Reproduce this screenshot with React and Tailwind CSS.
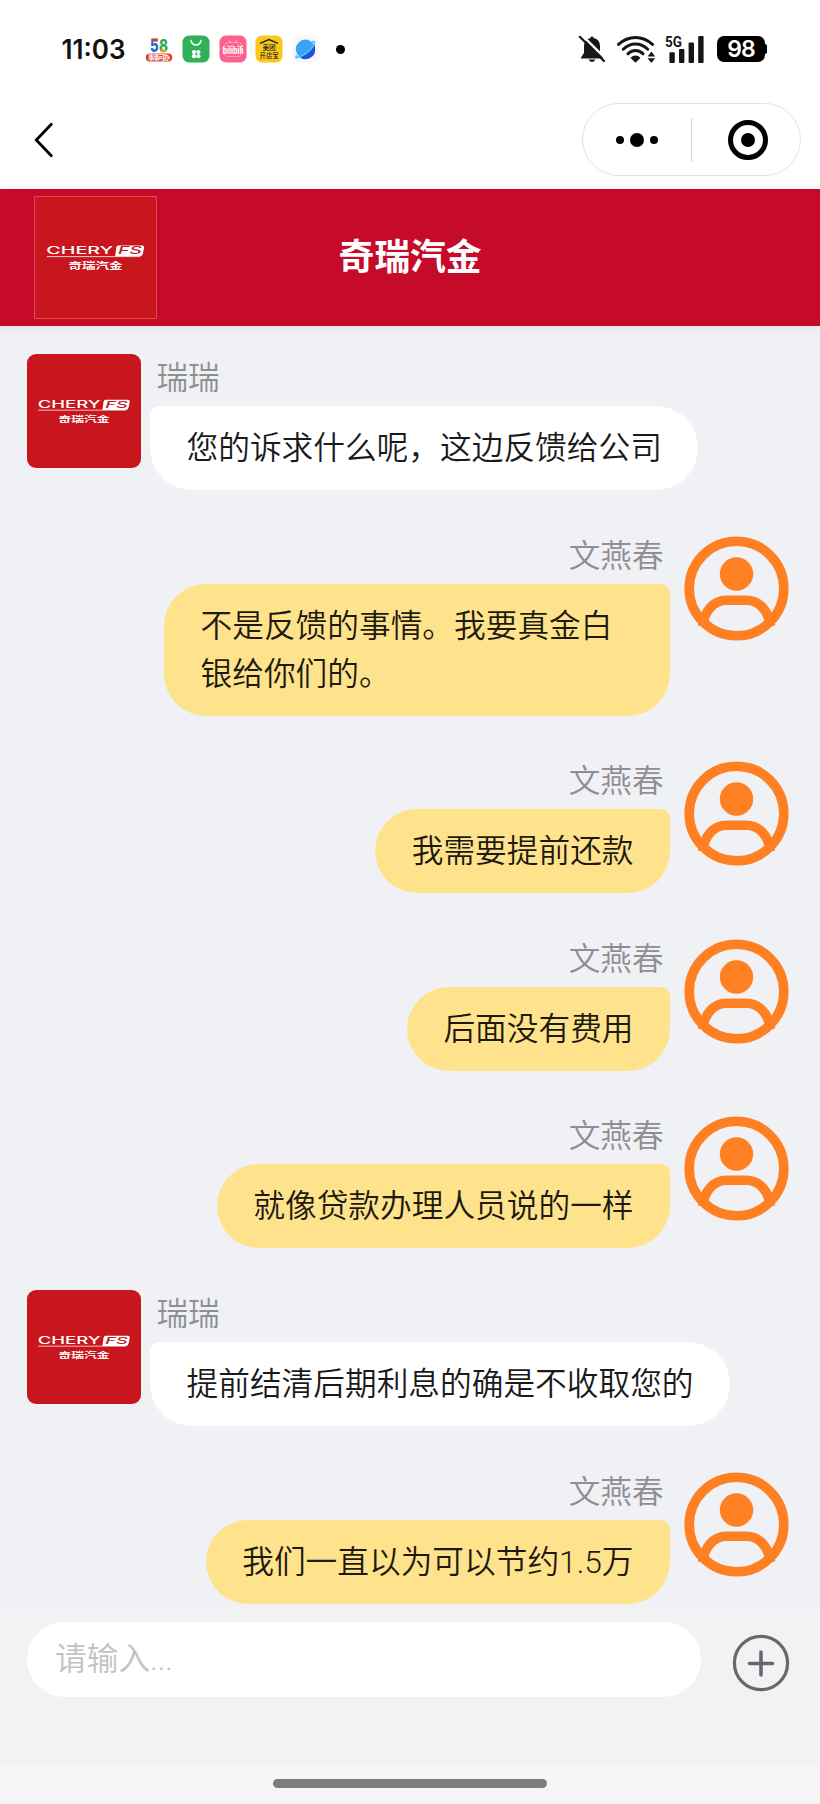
import React from 'react';

const messages = [
  { id: 1, from: 'agent', name: '瑞瑞', lines: ['您的诉求什么呢，这边反馈给公司'] },
  { id: 2, from: 'user', name: '文燕春', lines: ['不是反馈的事情。我要真金白', '银给你们的。'] },
  { id: 3, from: 'user', name: '文燕春', lines: ['我需要提前还款'] },
  { id: 4, from: 'user', name: '文燕春', lines: ['后面没有费用'] },
  { id: 5, from: 'user', name: '文燕春', lines: ['就像贷款办理人员说的一样'] },
  { id: 6, from: 'agent', name: '瑞瑞', lines: ['提前结清后期利息的确是不收取您的'] },
  { id: 7, from: 'user', name: '文燕春', lines: ['我们一直以为可以节约1.5万'] },
];

/**
 * BrandLogo - red CHERY FS square, used in the header and as agent avatar
 */
function BrandLogo({ className }) {
  return (
    <svg viewBox="0 0 123 123" className={className}>
      <rect width="123" height="123" fill="#c9151d" />
      <g fontFamily="Inter, sans-serif">
        <text x="11.5" y="58.3" fontSize="10.6" fontWeight="500" fill="#fff" textLength="68" lengthAdjust="spacingAndGlyphs">CHERY</text>
        <path d="M12 60.6H107" stroke="#fff" strokeWidth="0.8" />
        <path d="M84.5 49.3H109Q111.2 49.3 110.8 51.5L109.7 57.5Q109.2 60.3 106.5 60.3H81.4L82.6 51.6Q82.9 49.3 84.5 49.3Z" fill="#fff" />
        <text x="84.5" y="58.4" fontSize="10" fontWeight="500" fontStyle="italic" fill="#c9151d" textLength="24" lengthAdjust="spacingAndGlyphs">FS</text>
      </g>
      <text x="34" y="73.3" fontSize="8.8" fontWeight="700" fill="#fff" textLength="55" fontFamily="'Noto Sans CJK SC', sans-serif" lengthAdjust="spacingAndGlyphs">奇瑞汽金</text>
    </svg>
  );
}

function UserAvatar() {
  return (
    <svg viewBox="0 0 114 114" className="h-[114px] w-[114px] shrink-0" fill="none" stroke="#ff8022" strokeWidth="9.6">
      <circle cx="57.5" cy="56.5" r="47.3" />
      <circle cx="57.5" cy="42" r="16.7" fill="#ff8022" stroke="none" />
      <path d="M23.5 94.2C25.5 79 34.5 68.2 47.5 68.2H67.5C80.5 68.2 89.5 79 91.5 94.2" />
    </svg>
  );
}

function StatusBar() {
  return (
    <div className="flex h-[98px] items-center pl-[61px] pr-[53px]">
      <svg viewBox="0 0 66 40" className="h-10 w-[66px] overflow-visible">
        <text x="0.5" y="29.5" fontSize="26.5" fontWeight="600" fill="#111" fontFamily="Inter, sans-serif" textLength="64" lengthAdjust="spacingAndGlyphs">11:03</text>
      </svg>
      <div className="ml-[18px] flex items-center gap-[8.8px]">
        {/* 58 */}
        <svg viewBox="0 0 28 28" className="h-7 w-7 overflow-visible">
          <g fontFamily="Inter, sans-serif" fontWeight="800" fontSize="18">
            <text x="5" y="16.5" fill="#2465d8" textLength="8.6" lengthAdjust="spacingAndGlyphs">5</text>
            <text x="14" y="16.5" fill="#2fa84f" textLength="9" lengthAdjust="spacingAndGlyphs">8</text>
          </g>
          <path d="M6.4 4.6H12.6" stroke="#e5392b" strokeWidth="2.4" />
          <path d="M15.6 15.4Q18.4 17.6 21.6 15" stroke="#f0a51c" strokeWidth="2.2" fill="none" />
          <rect x="0.8" y="18.4" width="26.4" height="8.2" rx="4" fill="#d9422c" />
          <text x="3" y="24.9" fontSize="6.4" fontWeight="700" fill="#fff" textLength="22" fontFamily="'Noto Sans CJK SC', sans-serif">事事可办</text>
        </svg>
        {/* shopping bag */}
        <svg viewBox="0 0 28 28" className="h-7 w-7">
          <rect x="0.5" y="0.5" width="27" height="27" rx="6.5" fill="#31b057" />
          <path d="M9 5.5Q10 10 14 10T19 5.5" stroke="#fff" strokeWidth="1.5" fill="none" strokeLinecap="round" />
          <g fill="#fff">
            <circle cx="12" cy="17" r="2.1" />
            <circle cx="16.4" cy="17" r="2.1" />
            <circle cx="12" cy="21.2" r="2.1" />
            <circle cx="16.4" cy="21.2" r="2.1" />
          </g>
        </svg>
        {/* bilibili */}
        <svg viewBox="0 0 28 28" className="h-7 w-7 overflow-visible">
          <rect x="0.5" y="0.5" width="27" height="27" rx="6.5" fill="#fb6090" />
          <path d="M10 5L12 8M18 5L16 8" stroke="#fff" strokeOpacity="0.5" />
          <rect x="5.5" y="7.5" width="17" height="14" rx="3" fill="none" stroke="#fff" strokeOpacity="0.35" />
          <text x="3.5" y="18.6" fontSize="11" fontWeight="700" fill="#fff" fontFamily="Inter, sans-serif" textLength="21" lengthAdjust="spacingAndGlyphs">bilibili</text>
        </svg>
        {/* merchant app */}
        <svg viewBox="0 0 28 28" className="h-7 w-7 overflow-visible">
          <rect x="0.5" y="0.5" width="27" height="27" rx="6.5" fill="#fcc71b" />
          <path d="M5 8.4L14 4.6L23 8.4" stroke="#222" strokeWidth="1.4" fill="none" />
          <g fontFamily="'Noto Sans CJK SC', sans-serif" fontWeight="500" fill="#222">
            <text x="7.4" y="15.4" fontSize="6.6">美团</text>
            <text x="4.6" y="22.6" fontSize="6.4">开店宝</text>
          </g>
        </svg>
        {/* browser */}
        <svg viewBox="0 0 28 28" className="h-7 w-7">
          <rect x="0.5" y="0.5" width="27" height="27" rx="6.5" fill="#f7f8fa" />
          <circle cx="13.4" cy="14.2" r="9.6" fill="#37a3f8" />
          <path d="M23 13A9.6 9.6 0 0 1 7 21.6Q18 19.5 23 9.6Z" fill="#1b55dc" />
          <path d="M5 22.6Q3.4 23.2 4.4 20.8M5 22.6Q16 20 22 9.4Q23.6 6 20.8 6.6" stroke="#58b9fb" strokeWidth="1.6" fill="none" strokeLinecap="round" />
        </svg>
      </div>
      <span className="ml-[16px] h-[9px] w-[9px] rounded-full bg-black" />

      <div className="ml-auto flex items-center">
        {/* muted bell */}
        <svg viewBox="0 0 28 28" className="h-7 w-7">
          <path d="M14 1.6Q15.4 1.6 15.6 3Q22 4.6 22 11V18L25 22.6V23.6H3V22.6L6 18V11Q6 4.6 12.4 3Q12.6 1.6 14 1.6Z" fill="#161616" />
          <path d="M10.6 24.6H17.4Q16.6 27 14 27T10.6 24.6Z" fill="#161616" />
          <path d="M3.8 0L28.7 24.7" stroke="#fff" strokeWidth="2.4" />
          <path d="M1.8 1.8L26 26" stroke="#161616" strokeWidth="2.2" strokeLinecap="round" />
        </svg>
        <svg viewBox="0 0 40 28" className="ml-[10px] h-7 w-10" fill="none" stroke="#161616" strokeWidth="3" strokeLinecap="round">
          <path d="M2.5 9.4Q10 2.4 19.5 2.4T36.5 9.4" />
          <path d="M7.3 14.2Q12.5 9 19.5 9T31.7 14.2" />
          <path d="M12 18.8Q15 15.4 19.5 15.4T27 18.8" />
          <path d="M14.4 22.8Q19.5 18.4 24.6 22.8L19.5 27.8Z" fill="#161616" stroke="none" />
          <path d="M31.6 21.4L35.4 16.4L39.2 21.4ZM31.6 23.2L35.4 28L39.2 23.2Z" fill="#161616" stroke="none" />
        </svg>
        <svg viewBox="0 0 40 28" className="ml-[9px] h-7 w-10 overflow-visible" fill="#161616">
          <text x="0" y="12.4" fontSize="15" fontWeight="700" fontFamily="Roboto, sans-serif" textLength="17" lengthAdjust="spacingAndGlyphs">5G</text>
          <rect x="4.4" y="17.3" width="5.4" height="10.7" rx="1" />
          <rect x="14" y="14" width="5.4" height="14" rx="1" />
          <rect x="23.6" y="7.4" width="5.4" height="20.6" rx="1" />
          <rect x="33.2" y="1" width="5.4" height="27" rx="1" />
        </svg>
        <div className="ml-[12px] flex items-center">
          <div className="flex h-[26px] w-[48px] items-center justify-center rounded-[7px] bg-black font-['Inter'] text-[23px] leading-none font-semibold tracking-[-1px] text-white">
            98
          </div>
          <span className="h-[10px] w-[2px] rounded-r bg-black" />
        </div>
      </div>
    </div>
  );
}

function NavBar() {
  return (
    <div className="flex h-[91px] items-start justify-between pl-[34px] pr-[19px] pt-[5px]">
      <svg viewBox="0 0 20 36" className="mt-[19px] h-9 w-5" fill="none" stroke="#000" strokeWidth="2.8" strokeLinecap="round">
        <path d="M17.3 2.3L2.3 18L17.3 33.7" />
      </svg>
      <div className="flex h-[73px] w-[219px] items-center rounded-full border border-[#e2e2e2]">
        <div className="flex flex-1 items-center justify-center gap-[6px]">
          <span className="h-2 w-2 rounded-full bg-black" />
          <span className="h-[14px] w-[14px] rounded-full bg-black" />
          <span className="h-2 w-2 rounded-full bg-black" />
        </div>
        <span className="h-[44px] w-px bg-[#d4d4d4]" />
        <div className="flex w-[108px] justify-center pl-[4px]">
          <div className="flex h-10 w-10 items-center justify-center rounded-full border-[5.5px] border-black">
            <span className="h-[14px] w-[14px] rounded-full bg-black" />
          </div>
        </div>
      </div>
    </div>
  );
}

function Message({ message }) {
  const isUser = message.from === 'user';

  return (
    <div className={`flex items-start ${isUser ? 'flex-row-reverse' : ''}`}>
      {isUser ? <UserAvatar /> : <BrandLogo className="h-[114px] w-[114px] shrink-0 rounded-[9px]" />}
      <div className={`flex flex-col ${isUser ? 'mr-[9px] items-end' : 'ml-[9px] items-start'}`}>
        <div className="h-[52px] px-[6.5px] text-[31.6px] leading-[49px] text-[#8e8f92]">{message.name}</div>
        <div
          className={`px-[36.5px] pt-[19px] pb-[17px] text-[31.7px] leading-[48px] whitespace-nowrap ${
            message.lines.length > 1 ? 'w-[506px]' : ''
          } ${
            isUser
              ? 'rounded-[42px] rounded-tr-[9px] bg-[#ffe38c] text-[#1d1a10]'
              : 'rounded-[42px] rounded-tl-[9px] bg-white text-[#1a1a1a]'
          }`}
        >
          {message.lines.map(line => (
            <div key={line}>{line}</div>
          ))}
        </div>
      </div>
    </div>
  );
}

function App() {
  return (
    <div className="flex h-[1804px] w-[820px] flex-col overflow-hidden bg-[#f0f1f4] font-['Roboto','Noto_Sans_CJK_SC',sans-serif] font-[350]">
      <div className="bg-white">
        <StatusBar />
        <NavBar />
      </div>

      {/* Header */}
      <div className="grid h-[137px] shrink-0 grid-cols-[1fr_auto_1fr] items-center bg-[#c60a2a] px-[34px] shadow-[0_2px_10px_rgba(0,0,0,0.06)]">
        <BrandLogo className="h-[123px] w-[123px] border border-[#dc4a50]" />
        <h1 className="pt-[3px] text-[35.8px] leading-none font-bold text-white">奇瑞汽金</h1>
      </div>

      {/* Messages */}
      <div className="flex h-[1282px] shrink-0 flex-col gap-[41.6px] px-[27px] pt-[28px]">
        {messages.map(message => (
          <Message key={message.id} message={message} />
        ))}
      </div>

      {/* Input */}
      <div className="flex h-[157px] shrink-0 items-start bg-[#f1f2f4] pt-[14px] pl-[27px] pr-[30px]">
        <div className="flex h-[75px] w-[674px] items-center rounded-full bg-white pt-[1px] pl-[28px] text-[31.7px] text-[#c2c2c2]">
          请输入...
        </div>
        <svg viewBox="0 0 58 58" className="mt-[11.5px] ml-auto h-[58px] w-[58px]" fill="none" stroke="#66686b" strokeLinecap="round">
          <circle cx="29" cy="29" r="26.6" strokeWidth="3.2" />
          <path d="M29 18V41M17.5 29.5H40.5" strokeWidth="3.6" />
        </svg>
      </div>

      <div className="flex flex-1 justify-center bg-[#f6f6f6] pt-[14px]">
        <div className="h-[9px] w-[274px] rounded-full bg-[#7d7d7d]" />
      </div>
    </div>
  );
}

export default App;
